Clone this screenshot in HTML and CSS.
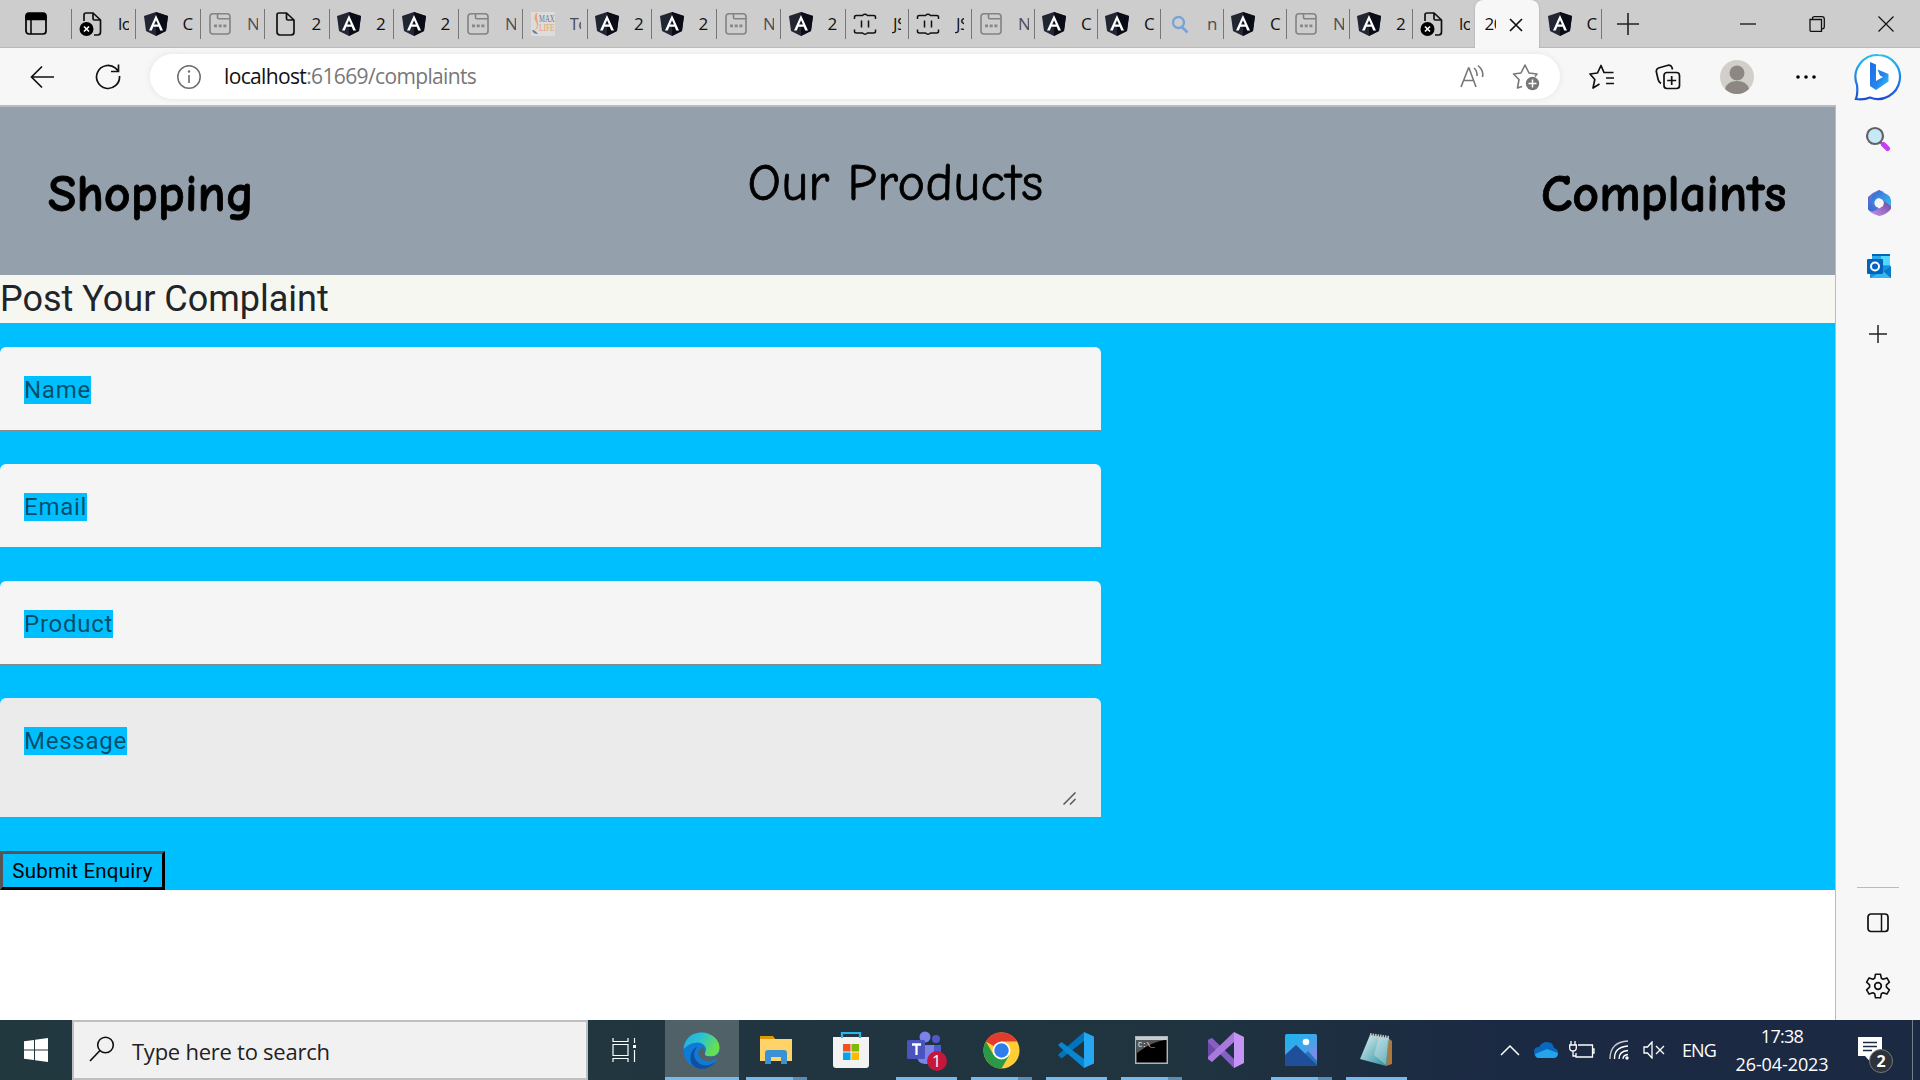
FILE: index.html
```html
<!DOCTYPE html>
<html lang="en">
<head>
<meta charset="utf-8">
<title>Complaints</title>
<link rel="stylesheet" href="styles.css">
</head>
<body>
<svg class="sprite" aria-hidden="true">
  <defs>
    <linearGradient id="edgeTop" x1="0" y1="0" x2="1" y2=".4"><stop offset="0" stop-color="#23a9e0"/><stop offset=".5" stop-color="#2cc3d0"/><stop offset="1" stop-color="#68e04e"/></linearGradient>
    <linearGradient id="bingRing" x1="0" y1="0" x2="0" y2="1"><stop offset="0" stop-color="#27bfee"/><stop offset="1" stop-color="#1b4fd8"/></linearGradient>
    <linearGradient id="bingB" x1="0" y1="0" x2="1" y2="1"><stop offset="0" stop-color="#1b6ce8"/><stop offset=".6" stop-color="#2486ee"/><stop offset="1" stop-color="#36d5e8"/></linearGradient>
    <linearGradient id="photo" x1="0" y1="0" x2="1" y2="1"><stop offset="0" stop-color="#1fb2ee"/><stop offset=".5" stop-color="#3ba7ea"/><stop offset="1" stop-color="#a779e0"/></linearGradient>
    <linearGradient id="note" x1="0" y1="0" x2="1" y2="1"><stop offset="0" stop-color="#e4f3f5"/><stop offset="1" stop-color="#1e8a9c"/></linearGradient>
    <linearGradient id="ms1" x1="0" y1="1" x2="1" y2="0"><stop offset="0" stop-color="#2a6bd0"/><stop offset="1" stop-color="#b07ade"/></linearGradient>
    <linearGradient id="ms2" x1="0" y1="0" x2="1" y2="1"><stop offset="0" stop-color="#3a62d0"/><stop offset="1" stop-color="#3bc3f0"/></linearGradient>
    <linearGradient id="ms3" x1="0" y1="1" x2="1" y2="0"><stop offset="0" stop-color="#c792ec"/><stop offset="1" stop-color="#6b489c"/></linearGradient>
    <symbol id="ang" viewBox="0 0 24 24"><path d="M12 0 24 4 22 19 12 24 2 19 0 4z" fill="#222633"/><path d="M12 0 24 4 22 19 12 24z" fill="#090c17"/><path d="M12 3 5 18.5h2.8l1.5-3.7h5.4l1.5 3.7H19zm0 5.2 1.9 4.4h-3.8z" fill="#fff"/></symbol>
    <symbol id="win" viewBox="0 0 24 24"><path d="M9.500 2v3.500q0 1.200 1.200 1.200H21.500M5 1.800h14q3 0 3 3V19q0 3-3 3H5q-3 0-3-3V5q0-3.200 3-3.200z" fill="none" stroke="#838383" stroke-width="1.600"/><path d="M6 12.500h3v2.800H6zm4.700 0h3v2.800h-3zm4.700 0h3v2.800h-3z" fill="#888"/></symbol>
    <symbol id="doc" viewBox="0 0 24 24"><path d="M6 1h7.500L21 8v12q0 3-3 3H7q-3 0-3-3V3q0-2 2-2zM13.500 1v5.500q0 1.500 1.500 1.500h6" fill="none" stroke="#111" stroke-width="1.700"/></symbol>
    <symbol id="bad" viewBox="0 0 24 24"><path d="M5 9V3q0-2 2-2h7l7.500 7v12q0 3-3 3H15M14 1v5.500q0 1.500 1.500 1.500h6" fill="none" stroke="#111" stroke-width="1.700"/><circle cx="7.500" cy="17" r="7" fill="#000"/><path d="m5 14.500 5 5m0-5-5 5" stroke="#fff" stroke-width="1.600"/></symbol>
    <symbol id="js" viewBox="0 0 24 24"><path d="M1.500 7V5q0-1.500 2-1.500h6q2.500-2.500 5 0h6q2 0 2 1.500v2M1.500 17.500v2q0 1.500 2 1.500h6q2.500 2.500 5 0h6q2 0 2-1.500v-2M8.500 8.500v7m7-7v7" fill="none" stroke="#111" stroke-width="1.500"/></symbol>
    <symbol id="find" viewBox="0 0 24 24"><path d="m13.500 14.500 6 6" stroke="#78a4d4" stroke-width="2.600"/><circle cx="10.500" cy="10.500" r="5.500" fill="none" stroke="#78a4d4" stroke-width="2.300"/></symbol>
    <symbol id="life" viewBox="0 0 24 24"><path d="M0 0h24v24H0z" fill="#dedbd8"/><path d="M5 1q-3 5 0 9t-2 9q5-3 4-8t-1-5 0-5z" fill="#eba478"/><path d="M1 18q3 0 6 4-5 0-6-4z" fill="#5b7ea9"/><text x="8" y="10" class="life-a" textLength="15.500" lengthAdjust="spacingAndGlyphs">MAX</text><text x="8" y="19" class="life-b" textLength="15.500" lengthAdjust="spacingAndGlyphs">LIFE</text></symbol>
  </defs>
</svg>
<div class="screen">
  <div class="tabs">
    <div class="tab-menu"><svg width="24" height="24" viewBox="0 0 24 24"><rect x="2" y="2" width="20" height="20" rx="3" fill="none" stroke="#000" stroke-width="1.700"/><path d="M2 7.500V4q0-3 3-3h14q3 0 3 3v3.500zM7 7v15" stroke="#000" stroke-width="1.500"/></svg></div>
    <div class="tab wide"><svg><use href="#bad"/></svg><span>lo</span></div>
    <div class="tab wide"><svg><use href="#ang"/></svg><span>C</span></div>
    <div class="tab wide"><svg><use href="#win"/></svg><span class="dim">N</span></div>
    <div class="tab wide"><svg><use href="#doc"/></svg><span>2</span></div>
    <div class="tab wide"><svg><use href="#ang"/></svg><span>2</span></div>
    <div class="tab wide"><svg><use href="#ang"/></svg><span>2</span></div>
    <div class="tab wide"><svg><use href="#win"/></svg><span class="dim">N</span></div>
    <div class="tab wide"><svg><use href="#life"/></svg><span class="dim">To</span></div>
    <div class="tab wide"><svg><use href="#ang"/></svg><span>2</span></div>
    <div class="tab wide"><svg><use href="#ang"/></svg><span>2</span></div>
    <div class="tab wide"><svg><use href="#win"/></svg><span class="dim">N</span></div>
    <div class="tab wide"><svg><use href="#ang"/></svg><span>2</span></div>
    <div class="tab"><svg><use href="#js"/></svg><span class="js">JS</span></div>
    <div class="tab"><svg><use href="#js"/></svg><span class="js">JS</span></div>
    <div class="tab"><svg><use href="#win"/></svg><span class="dim">N</span></div>
    <div class="tab"><svg><use href="#ang"/></svg><span>C</span></div>
    <div class="tab"><svg><use href="#ang"/></svg><span>C</span></div>
    <div class="tab"><svg><use href="#find"/></svg><span class="dim">n</span></div>
    <div class="tab"><svg><use href="#ang"/></svg><span>C</span></div>
    <div class="tab"><svg><use href="#win"/></svg><span class="dim">N</span></div>
    <div class="tab"><svg><use href="#ang"/></svg><span>2</span></div>
    <div class="tab"><svg><use href="#bad"/></svg><span>lo</span></div>
    <div class="tab active"><span>20</span><svg width="14" height="14" viewBox="0 0 14 14" class="x"><path d="m1 1 12 12m0-12L1 13" stroke="#111" stroke-width="1.700"/></svg></div>
    <div class="tab first"><svg><use href="#ang"/></svg><span>C</span></div>
    <div class="new-tab"><svg width="22" height="22" viewBox="0 0 22 22"><path d="M11 0v22M0 11h22" stroke="#222" stroke-width="1.600"/></svg></div>
    <div class="window-buttons">
      <svg width="16" height="16" viewBox="0 0 16 16"><path d="M0 8h16" stroke="#111" stroke-width="1.300"/></svg>
      <svg width="16" height="16" viewBox="0 0 16 16"><path d="M1 3.500h11.500v12H2.500Q1 15.500 1 14zM3.500 3V2q0-1.300 2-1.300h7.500q2.300 0 2.300 2.300v8q0 1.500-2 2" fill="none" stroke="#111" stroke-width="1.300"/></svg>
      <svg width="16" height="16" viewBox="0 0 16 16"><path d="m.5.5 15 15m0-15-15 15" stroke="#111" stroke-width="1.200"/></svg>
    </div>
  </div>
  <div class="middle">
    <div class="main">
      <div class="toolbar">
        <svg class="back" width="24" height="24" viewBox="0 0 24 24"><path d="M24 12H1.500M12 1.500 1.500 12 12 22.500" fill="none" stroke="#111" stroke-width="1.700"/></svg>
        <svg class="reload" width="26" height="26" viewBox="0 0 26 26"><path d="M24.500 12A11.500 11.500 0 1 1 20.500 4.200l2.700 2.600M23.500 0.500v7H16" fill="none" stroke="#111" stroke-width="1.700"/></svg>
        <div class="address">
          <svg width="26" height="26" viewBox="0 0 26 26"><circle cx="13" cy="13" r="11.200" fill="none" stroke="#6c6c6c" stroke-width="1.500"/><path d="M13 11v8" stroke="#6c6c6c" stroke-width="1.600"/><circle cx="13" cy="7.500" r="1.200" fill="#6c6c6c"/></svg>
          <span class="url">localhost<span>:61669/complaints</span></span>
          <svg class="read" width="26" height="26" viewBox="0 0 26 26"><path d="m2 23 7.500-19h.5l7 19M4.500 16.500h10M15 4q3.500 3 3 8M19 1.500q6 5 4.500 11.500" fill="none" stroke="#777" stroke-width="1.600"/></svg>
          <svg width="28" height="28" viewBox="0 0 28 28"><path d="M10 23.500 5.500 25 7 16.500 1.500 11l7.500-1L13 2l4 8 8 1-2 2.500" fill="none" stroke="#777" stroke-width="1.600" stroke-linejoin="round"/><circle cx="20.500" cy="20.500" r="6.700" fill="#777"/><path d="M20.500 16.500v8m-4-4h8" stroke="#fff" stroke-width="1.500"/></svg>
        </div>
        <svg class="fav" width="26" height="26" viewBox="0 0 26 26"><path d="m10.500 20-6.500 4 1.800-8.500L1 10l7.500-1L12 1.500l3 7h9.500M17 14h8m-8 5.500h8" fill="none" stroke="#111" stroke-width="1.700" stroke-linejoin="round"/></svg>
        <svg class="coll" width="26" height="26" viewBox="0 0 26 26"><rect x="9" y="8.500" width="15.500" height="16" rx="3" fill="none" stroke="#111" stroke-width="1.700"/><path d="M16.700 12v9m-4.500-4.500h9M6 19.500Q3.500 18 3 15L1.300 7.500Q1 5 3.500 4L13 1.300q3-.5 4 2.200l.5 2" fill="none" stroke="#111" stroke-width="1.700"/></svg>
        <svg class="avatar" width="34" height="34" viewBox="0 0 34 34"><circle cx="17" cy="17" r="17" fill="#d2cfcb"/><circle cx="17" cy="13" r="7.500" fill="#8c8783"/><path d="M5 29q2-8 12-8t12 8a17 17 0 0 1-24 0z" fill="#8c8783"/></svg>
        <svg class="more" width="20" height="4" viewBox="0 0 20 4"><circle cx="2" cy="2" r="1.800"/><circle cx="10" cy="2" r="1.800"/><circle cx="18" cy="2" r="1.800"/></svg>
      </div>
      <div class="page">
        <header>
          <h3>Shopping</h3>
          <p>Our Products</p>
          <h3 class="complaints">Complaints</h3>
        </header>
        <h4>Post Your Complaint</h4>
        <form>
          <div class="field"><span>Name</span></div>
          <div class="field"><span>Email</span></div>
          <div class="field"><span>Product</span></div>
          <div class="field area"><span>Message</span><svg width="13" height="13" viewBox="0 0 13 13"><path d="M.5 12.500 12.500.5M7 12.500l5.500-5.500" stroke="#555" stroke-width="1.500"/></svg></div>
          <button type="button">Submit Enquiry</button>
        </form>
      </div>
    </div>
    <aside>
      <svg class="bing" width="48" height="50" viewBox="0 0 48 50"><path d="M24 2a22 22 0 1 1-8 42.500Q10 47 2 46q2-5 1-14A22 22 0 0 1 24 2z" fill="#fff" stroke="url(#bingRing)" stroke-width="2.200"/><path d="m16 9 6 2.500V28l7-4-3-1.500-2.500-6 11 4.500v7.500L22 37l-6-4z" fill="url(#bingB)"/></svg>
      <svg class="search" width="26" height="26" viewBox="0 0 26 26"><path d="m14 15 4 4" stroke="#666" stroke-width="2"/><path d="m18.500 18.500 4 4" stroke="#c83cf5" stroke-width="5" stroke-linecap="round"/><circle cx="10" cy="10" r="8" fill="#c8e8fa" stroke="#626262" stroke-width="2.200"/></svg>
      <svg class="m365" width="26" height="28" viewBox="0 0 26 28"><path d="M13 1Q7 3 2 8v12q1 3 5 3l6-3-4-6q0-6 9-11z" fill="url(#ms1)"/><path d="m13 1 9 5q3 2 3 5v8L13 9q-4 1-4 5L6 16V6z" fill="url(#ms2)"/><path d="M25 17v3q-5 6-12 7-6-2-9-4 4 0 8-3l5-3 1-5z" fill="url(#ms3)"/><circle cx="13" cy="14" r="4.600" fill="#f7f7f7"/></svg>
      <svg class="outlook" width="24" height="24" viewBox="0 0 24 24"><path d="M5 0h18v14H5z" fill="#28a8ea"/><path d="M14 1h9v10h-9z" fill="#50d9ff"/><path d="M5 0h18v2H5z" fill="#0364b8"/><path d="M3 12h21v12H3z" fill="#1490df"/><path d="m3 24 21-12v12z" fill="#35b8f1"/><path d="m16 17 8-5v12z" fill="#0a78c8"/><rect y="5" width="16" height="15" rx="1" fill="#0364c0"/><circle cx="8" cy="12.500" r="4" fill="none" stroke="#fff" stroke-width="2"/></svg>
      <svg class="plus" width="18" height="18" viewBox="0 0 18 18"><path d="M9 0v18M0 9h18" stroke="#222" stroke-width="1.500"/></svg>
      <div class="rule"></div>
      <svg class="panel" width="22" height="20" viewBox="0 0 22 20"><rect x="1" y="1" width="20" height="17.500" rx="3" fill="none" stroke="#111" stroke-width="1.700"/><path d="M14.500 1v17" stroke="#111" stroke-width="1.500"/></svg>
      <svg class="gear" width="26" height="26" viewBox="0 0 26 26"><path d="M10.500 1.200h5l.8 4 1.800 1 3.800-1.300 2.500 4.300-3 2.700v2.200l3 2.700-2.500 4.300-3.800-1.300-1.800 1-.8 4h-5l-.8-4-1.800-1-3.800 1.300-2.500-4.300 3-2.700v-2.200l-3-2.700 2.500-4.300 3.800 1.300 1.800-1z" fill="none" stroke="#111" stroke-width="1.600" stroke-linejoin="round"/><circle cx="13" cy="13" r="3.300" fill="none" stroke="#111" stroke-width="1.700"/></svg>
    </aside>
  </div>
  <div class="taskbar">
    <div class="start"><svg width="24" height="24" viewBox="0 0 24 24"><path d="M0 3.300 10 2v9.500H0zM11 1.800 24 0v11.500H11zM0 12.500h10V22L0 20.700zM11 12.500h13V24l-13-1.800z" fill="#fff"/></svg></div>
    <div class="search-box"><svg width="26" height="26" viewBox="0 0 26 26"><circle cx="16.500" cy="9" r="7.800" fill="none" stroke="#111" stroke-width="1.600"/><path d="M11 14.500 1 25" stroke="#111" stroke-width="1.700"/></svg><span>Type here to search</span></div>
    <div class="task-view"><svg width="24" height="24" viewBox="0 0 24 24"><path d="M1 0v3.500h15V0M1 24v-3.500h15V24M1 6.500h15v11H1zM22.500 0v5M22.500 12v12" fill="none" stroke="#fff" stroke-width="1.200"/><path d="M21 7h3v3h-3z" fill="#fff"/></svg></div>
    <div class="app current"><svg width="37" height="37" viewBox="0 0 37 37"><circle cx="18.500" cy="18.500" r="18" fill="#0f7bd6"/><path d="M.5 17C2 5 10 .5 18.500.5c10 0 18 7 18 15 0 6-4 9-9 9-4 0-6-1-5.500-3Q25 15 19 11.500 10 8 .5 17z" fill="url(#edgeTop)"/><path d="M14 15q-7 10 3 17 8 4 16-3-6 8-15 8Q5 35 8 22q2-6 6-7z" fill="#1150a0"/><path d="M20 15q-8 5-3 11 6 6 15 1l3 0 2-3v-4q-4 5-10 4.500-6 0-5.500-3 1.500-2-1.500-6.500z" fill="#506268"/></svg></div>
    <div class="app"><svg width="32" height="28" viewBox="0 0 32 28"><path d="M0 0h13l3 4H0z" fill="#dc9908"/><path d="M0 3h32v22H0z" fill="#ffd368"/><path d="M5 28V17q0-3 3-3h16q3 0 3 3v11h-6v-7H11v7z" fill="#3b91d6"/></svg><i class="bar split"></i></div>
    <div class="app"><svg width="36" height="36" viewBox="0 0 36 36"><path d="M9 9V1h18v8" fill="none" stroke="#27b7f0" stroke-width="2.200"/><path d="M0 5h36v28q0 3-3 3H3q-3 0-3-3z" fill="#f2f2f2"/><path d="M9 6V2m18 4V2" stroke="#27b7f0" stroke-width="2"/><path d="M10 12h7.500v7.500H10z" fill="#f25022"/><path d="M18.500 12H26v7.500h-7.500z" fill="#7fba00"/><path d="M10 20.500h7.500V28H10z" fill="#00a4ef"/><path d="M18.500 20.500H26V28h-7.500z" fill="#ffb900"/></svg></div>
    <div class="app"><svg width="40" height="38" viewBox="0 0 40 38"><circle cx="19" cy="6" r="5.500" fill="#7b83eb"/><circle cx="30" cy="8" r="4" fill="#5059c9"/><path d="M24 14h11v10q-2 8-10 7z" fill="#5059c9"/><path d="M11 14h17v12q-2 8-9 7-8-1-8-8z" fill="#7b83eb"/><rect x="1" y="9" width="18" height="19" rx="1.500" fill="#4b53bc"/><path d="M6 13.500h9M10.500 13v11" stroke="#fff" stroke-width="2.300"/></svg><b class="badge">1</b><i class="bar"></i></div>
    <div class="app"><svg width="37" height="37" viewBox="0 0 37 37"><circle cx="18.500" cy="18.500" r="18" fill="#ffcd36"/><path d="M18.500 18.500 2.900 9.500A18 18 0 0 1 34.100 9.500H18.500z" fill="#e33b2e"/><path d="M2.900 9.500A18 18 0 0 0 18.500 36.500L26.300 23 18.500 18.500 10.700 23z" fill="#2a9846"/><circle cx="18.500" cy="18.500" r="9" fill="#fff"/><circle cx="18.500" cy="18.500" r="7.200" fill="#2f7de9"/></svg><i class="bar split"></i></div>
    <div class="app"><svg width="36" height="36" viewBox="0 0 36 36"><path d="m0 23 3-3L26 0v9L3.500 26.500z" fill="#0274bd"/><path d="m0 13 3.500-3L26 27v9L3 16z" fill="#0a86d1"/><path d="m26 0 10 4.500v27L26 36z" fill="#25a7f2"/></svg><i class="bar"></i></div>
    <div class="app"><svg width="33" height="28" viewBox="0 0 33 28"><path d="M.7.700h31.600v26.600H.7z" fill="#000" stroke="#aeb5b8" stroke-width="1.500"/><path d="M1 1h31v3H1z" fill="#c6cccf"/><path d="M2 4h28Q16 6 2 17z" fill="#555"/><text x="3" y="11" class="cmd">C:\_</text></svg><i class="bar split"></i></div>
    <div class="app"><svg width="36" height="36" viewBox="0 0 36 36"><path d="M0 8 4 6l6 9v6l-6 9-4-3z" fill="#6c4aa5"/><path d="m26 0 10 5v26l-10 5z" fill="#c694f5"/><path d="m0 8 4-2 22 21v9L0 10z" fill="#865fc5"/><path d="M26 0v10L4 30l-4-3v-2z" fill="#a979df"/></svg></div>
    <div class="app"><svg width="32" height="32" viewBox="0 0 32 32"><rect width="32" height="32" rx="1.500" fill="url(#photo)"/><circle cx="21" cy="8" r="3.300" fill="#fff"/><path d="m15 25 8-8 9 10v5H15z" fill="#2875be"/><path d="M0 21 11 11l21 20v1H0z" fill="#1e4f98"/></svg><i class="bar split"></i></div>
    <div class="app"><svg width="34" height="34" viewBox="0 0 34 34"><path d="m28 4 5 4v23l-6 2z" fill="#aa7940"/><path d="m11 2 19 3-3 28L1 26z" fill="url(#note)"/><path d="m20 4 9 1-2 27-12-10z" fill="#e9f4f6" opacity=".35"/><path d="m11 2 19 3" stroke="#c5cccb" stroke-width="4" stroke-dasharray="1.500 1"/></svg><i class="bar"></i></div>
    <div class="tray">
      <svg class="up" width="20" height="12" viewBox="0 0 20 12"><path d="m1 11 9-9 9 9" fill="none" stroke="#fff" stroke-width="1.500"/></svg>
      <svg class="cloud" width="24" height="16" viewBox="0 0 24 16"><path d="M5 16Q0 15 0 10q0-5 5-5Q8 0 13 0q6 0 7 6 4 1 4 5 0 5-5 5z" fill="#0868bd"/><path d="M4 16Q1 15 1 12l12-5 11 4q0 5-5 5z" fill="#26a3eb"/></svg>
      <svg class="power" width="26" height="18" viewBox="0 0 26 18"><path d="M9 4h14.500v12H7v-4M24 8h1v4h-1M2 0v4m4-4v4M.7 4h6.600v3q0 3-3.300 3t-3.300-3zM4 10v5h3" fill="none" stroke="#fff" stroke-width="1.300"/></svg>
      <svg class="wifi" width="20" height="20" viewBox="0 0 20 20"><g fill="none" stroke="#fff" stroke-width="1.300"><path d="M1 19Q1 2 19 1" opacity=".75"/><path d="M5.500 19Q5 7 19 6"/><path d="M10 19q0-8 9-8.500"/><path d="M14 19q0-4 5-4.500"/></g><circle cx="18" cy="18" r="1.700" fill="#fff"/></svg>
      <svg class="volume" width="22" height="18" viewBox="0 0 22 18"><path d="M1 6h3.500L9 1v16l-4.500-5H1zM13 5l8 8m0-8-8 8" fill="none" stroke="#fff" stroke-width="1.300"/></svg>
      <span class="lang">ENG</span>
      <div class="clock"><span class="time">17:38</span><span>26-04-2023</span></div>
      <div class="notice"><svg width="24" height="26" viewBox="0 0 24 26"><path d="M0 0h24v19H12.500v6L7 19H0z" fill="#fff"/><path d="M5 5.500h14M5 9.500h14M5 13.500h9" stroke="#1b2b43" stroke-width="1.300"/></svg><b>2</b></div>
      <div class="desktop"></div>
    </div>
  </div>
</div>
</body>
</html>
```
FILE: styles.css
```css
* { box-sizing: border-box; }
body { margin: 0; overflow: hidden; font-family: "Segoe UI", "Open Sans", "Noto Sans", sans-serif; color: #111; }
svg { display: block; flex: none; }
.sprite { position: absolute; width: 0; height: 0; }
.screen { width: 1920px; height: 1080px; display: flex; flex-direction: column; background: #fff; }

.tabs { height: 48px; flex: none; display: flex; align-items: center; background: #cdcdcd; border-bottom: 1px solid #b9b9b9; }
.tab-menu { width: 70.500px; padding-left: 24px; }
.tab { width: 63px; height: 30px; flex: none; display: flex; align-items: center; padding-left: 7.5px; border-left: 1.500px solid #777; }
.tab.wide { width: 64.500px; }
.tab > svg { width: 24px; height: 24px; margin-right: 15px; }
.tab span { width: 11px; overflow: hidden; white-space: nowrap; font-size: 17px; line-height: 24px; letter-spacing: -.5px; }
.tab .dim { color: #4d4d56; }
.tab .js { width: 9px; padding-left: 1px; }
.tab.active { width: 64.500px; height: 48px; margin-bottom: -1px; padding-left: 10px; border: 0; background: #f7f7f7; border-radius: 8px 8px 0 0; box-shadow: 0 0 2px #999; clip-path: inset(0 -3px 0 -3px); }
.tab.active .x { width: 14px; height: 14px; margin: 2px 0 0 13px; }
.tab.first { border-left-color: transparent; width: 62px; }
.new-tab { padding-left: 15px; border-left: 1.500px solid #777; height: 30px; display: flex; align-items: center; }
.window-buttons { margin-left: auto; display: flex; gap: 53px; padding-right: 26px; }
.life-a, .life-b { font: 10px "Liberation Serif", serif; fill: #5e7ca5; }
.life-b { fill: #e7a27c; }

.middle { height: 972px; flex: none; display: flex; background: #f7f7f7; }
.main { width: 1836px; display: flex; flex-direction: column; }
.toolbar { height: 57px; flex: none; display: flex; align-items: center; }
.back { margin-left: 30px; }
.reload { margin-left: 41px; }
.address { width: 1410px; height: 45px; margin-left: 29px; padding: 0 20px 0 26px; display: flex; align-items: center; background: #fff; border-radius: 23px; box-shadow: 0 0 6px #e4e4e4; }
.url { margin-left: 22px; margin-bottom: 2px; font-size: 21px; letter-spacing: -.64px; white-space: nowrap; }
.url span { color: #777; }
.read { margin-left: auto; margin-right: 27px; }
.fav { margin-left: 29px; }
.coll { margin-left: 40px; }
.avatar { margin-left: 39px; }
.more { margin-left: 42px; }

.page { flex: 1; background: #fff; border-top: 2px solid #bbb; border-right: 1px solid #bbb; font-family: Roboto, sans-serif; }
header { height: 168px; background: #94a1ac; display: flex; justify-content: space-between; padding: 0 49px 0 48px; font-family: "Comic Sans MS", "Comic Neue", "Open Sans", sans-serif; font-size: 52px; line-height: 60px; color: #000; white-space: nowrap; -webkit-text-stroke: .8px #000; }
header h3, header p { margin: 0; font-size: inherit; }
header h3 { width: 244px; padding-top: 57px; font-weight: 700; }
header p { width: 294px; padding-top: 46px; margin-right: 44px; font-weight: 400; letter-spacing: .5px; }
header .complaints { width: 245px; }
h4 { margin: 0; height: 48px; background: #f7f7f1; font-size: 36px; line-height: 48px; font-weight: 400; color: #212529; }
form { height: 567px; padding-top: 24px; background: #00bfff; display: flex; flex-direction: column; align-items: flex-start; }
.field { width: 1101px; height: 84px; flex: none; margin-bottom: 33px; padding: 25px 25px 23px 24px; background: #f5f5f5; border-bottom: 1px solid #8a8a8a; border-radius: 6px 6px 0 0; font-size: 24px; line-height: 36px; letter-spacing: .75px; }
.field span { background: #00bfff; color: rgba(0, 0, 0, .6); }
.area { height: 120px; background: #ebebeb; display: flex; justify-content: space-between; }
.area span { height: 28px; line-height: 28px; margin-top: 4px; }
.area svg { align-self: flex-end; margin-bottom: -11px; }
button { width: 165px; height: 39px; padding: 0; border: 3px solid; border-color: #555 #000 #000 #555; background: #00bfff; color: #000; font: 20.500px Roboto, sans-serif; letter-spacing: .2px; white-space: nowrap; }

aside { width: 84px; display: flex; flex-direction: column; align-items: center; }
.bing { margin-top: 5px; }
.search { margin-top: 23px; }
.m365 { margin-top: 37px; margin-left: 2px; }
.outlook { margin-top: 37px; margin-left: 2px; }
.plus { margin-top: 47px; }
.rule { width: 42px; height: 1px; background: #bbb; margin-top: auto; }
.panel { margin-top: 25px; }
.gear { margin: 40px 0 21px; }

.taskbar { height: 60px; flex: none; display: flex; background: linear-gradient(90deg, #22383f 0, #20343f 60%, #1b2a43 78%, #1b2942 100%); color: #fff; }
.start { width: 72px; padding: 18px 24px; }
.search-box { width: 516px; border: 2px solid #bfbfbf; background: #f1f1f1; color: #222; display: flex; align-items: center; padding-left: 15px; font-size: 22px; letter-spacing: -.25px; }
.search-box svg { margin-bottom: 3px; }
.search-box span { margin-left: 17px; padding-top: 1px; }
.task-view { width: 77px; padding: 18px 0 0 24px; }
.app { position: relative; width: 75px; flex: none; display: flex; align-items: center; justify-content: center; }
.app.current { width: 73.500px; background: #506268; border-bottom: 3px solid #76b9ed; padding-top: 3px; }
.bar { position: absolute; left: 7px; bottom: 0; width: 61px; height: 3px; background: #76b9ed; }
.bar.split { background: linear-gradient(90deg, #76b9ed 47px, #5a8cb4 47px); }
.badge { position: absolute; left: 38px; top: 31px; width: 20px; height: 20px; border-radius: 50%; background: #c4173c; font: 16px/20px "Open Sans", sans-serif; text-align: center; }
.cmd { font: 7px "Liberation Mono", monospace; fill: #fff; }
.tray { flex: 1; display: flex; align-items: center; padding-left: 86.500px; font-size: 18px; }
.cloud { margin-left: 14px; }
.power { margin-left: 11px; }
.wifi { margin-left: 14px; }
.volume { margin-left: 14px; }
.lang { width: 34px; margin-left: 17px; letter-spacing: -.9px; }
.clock { width: 96px; margin-left: 18px; display: flex; flex-direction: column; align-items: center; line-height: 28px; letter-spacing: -.1px; white-space: nowrap; }
.time { letter-spacing: -.7px; }
.notice { position: relative; margin-left: 28px; }
.notice b { position: absolute; left: 11px; top: 12px; width: 24px; height: 24px; border: 1px solid #777; border-radius: 50%; background: #2c333b; font-size: 16px; line-height: 22px; text-align: center; }
.desktop { margin-left: auto; width: 8px; align-self: stretch; border-left: 1.500px solid #74808a; }
```
